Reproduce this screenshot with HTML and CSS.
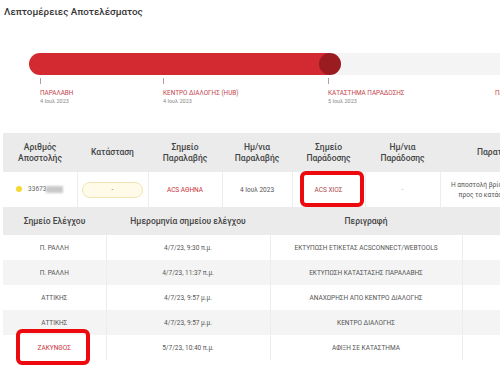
FILE: index.html
```html
<!DOCTYPE html>
<html lang="el">
<head>
<meta charset="utf-8">
<title>Λεπτομέρειες Αποτελέσματος</title>
<link rel="stylesheet" href="styles.css">
</head>
<body>
<div class="page">
  <h1 class="title">Λεπτομέρειες Αποτελέσματος</h1>

  <div class="timeline">
    <div class="track">
      <div class="fill" style="width:301px"></div>
      <div class="knob"></div>
    </div>
    <div class="stops">
      <div class="stop"><span class="tick"></span><span class="stop-name">ΠΑΡΑΛΑΒΗ</span><span class="stop-date">4 Ιουλ 2023</span></div>
      <div class="stop"><span class="tick"></span><span class="stop-name">ΚΕΝΤΡΟ ΔΙΑΛΟΓΗΣ (HUB)</span><span class="stop-date">4 Ιουλ 2023</span></div>
      <div class="stop"><span class="tick"></span><span class="stop-name">ΚΑΤΑΣΤΗΜΑ ΠΑΡΑΔΟΣΗΣ</span><span class="stop-date">5 Ιουλ 2023</span></div>
      <div class="stop stop-next"><span class="tick tick-empty"></span><span class="stop-name">ΠΑΡΑΔΟΣΗ</span><span class="stop-date">&nbsp;</span></div>
    </div>
  </div>

  <table class="grid shipments">
    <colgroup>
      <col class="c74"><col class="c71"><col class="c74"><col class="c70"><col class="c73"><col class="c75"><col class="c130">
    </colgroup>
    <thead>
      <tr>
        <th>Αριθμός<br>Αποστολής</th>
        <th>Κατάσταση</th>
        <th>Σημείο<br>Παραλαβής</th>
        <th>Ημ/νια<br>Παραλαβής</th>
        <th>Σημείο<br>Παράδοσης</th>
        <th>Ημ/νια<br>Παράδοσης</th>
        <th>Παρατηρήσεις</th>
      </tr>
    </thead>
    <tbody>
      <tr class="ship-row">
        <td><span class="num"><span class="dot"></span>33673<span class="masked"></span></span></td>
        <td><span class="pill">-</span></td>
        <td class="red">ACS ΑΘΗΝΑ</td>
        <td>4 Ιουλ 2023</td>
        <td class="marked"><span class="brown">ACS ΧΙΟΣ</span><span class="highlight hl-store"></span></td>
        <td class="muted">-</td>
        <td class="note">Η αποστολή βρίσκεται σε μεταφορά<br>προς το κατάστημα παράδοσης</td>
      </tr>
    </tbody>
  </table>

  <table class="grid checkpoints">
    <colgroup>
      <col class="c103"><col class="c164"><col class="c192"><col class="c150">
    </colgroup>
    <thead>
      <tr>
        <th>Σημείο Ελέγχου</th>
        <th>Ημερομηνία σημείου ελέγχου</th>
        <th>Περιγραφή</th>
        <th>Πληροφορίες</th>
      </tr>
    </thead>
    <tbody>
      <tr><td>Π. ΡΑΛΛΗ</td><td>4/7/23, 9:30 π.μ.</td><td>ΕΚΤΥΠΩΣΗ ΕΤΙΚΕΤΑΣ ACSCONNECT/WEBTOOLS</td><td></td></tr>
      <tr class="alt"><td>Π. ΡΑΛΛΗ</td><td>4/7/23, 11:37 π.μ.</td><td>ΕΚΤΥΠΩΣΗ ΚΑΤΑΣΤΑΣΗΣ ΠΑΡΑΛΑΒΗΣ</td><td></td></tr>
      <tr><td>ΑΤΤΙΚΗΣ</td><td>4/7/23, 9:57 μ.μ.</td><td>ΑΝΑΧΩΡΗΣΗ ΑΠΟ ΚΕΝΤΡΟ ΔΙΑΛΟΓΗΣ</td><td></td></tr>
      <tr class="alt"><td>ΑΤΤΙΚΗΣ</td><td>4/7/23, 9:57 μ.μ.</td><td>ΚΕΝΤΡΟ ΔΙΑΛΟΓΗΣ</td><td></td></tr>
      <tr><td class="marked red">ΖΑΚΥΝΘΟΣ<span class="highlight hl-point"></span></td><td>5/7/23, 10:40 π.μ.</td><td>ΑΦΙΞΗ ΣΕ ΚΑΤΑΣΤΗΜΑ</td><td></td></tr>
    </tbody>
  </table>
</div>
</body>
</html>
```

FILE: styles.css
```css
* { box-sizing: border-box; }

html, body {
  margin: 0;
  padding: 0;
  background: #ffffff;
}

body {
  font-family: Roboto, "Noto Sans", "Liberation Sans", sans-serif;
  color: #555;
}

.page {
  width: 500px;
  height: 374px;
  overflow: hidden;
}

.title {
  margin: 5px 0 0 4px;
  font-size: 9.8px;
  line-height: 14px;
  font-weight: 500;
  color: #333;
}

/* ---------- timeline ---------- */
.timeline {
  margin-top: 34px;
}

.track {
  display: flex;
  margin-left: 29px;
  height: 22px;
  background: #f4f4f4;
  border-radius: 11px 0 0 11px;
}

.fill {
  height: 22px;
  background: #d22a30;
  border-radius: 11px 0 0 11px;
}

.knob {
  width: 22px;
  height: 22px;
  margin-left: -11px;
  border-radius: 50%;
  background: #9a1c21;
}

.stops {
  display: grid;
  grid-template-columns: 123px 165px 167px 1fr;
  margin: 3px 0 0 40px;
}

.stop {
  display: flex;
  flex-direction: column;
  align-items: flex-start;
  white-space: nowrap;
}

.tick {
  width: 1px;
  height: 6px;
  background: #b89a9a;
}

.tick-empty { background: transparent; }

.stop-name {
  margin-top: 5px;
  font-size: 6.4px;
  line-height: 8px;
  color: #c4434a;
}

.stop-date {
  margin-top: 1px;
  font-size: 5.5px;
  line-height: 7px;
  color: #888;
}

/* ---------- tables ---------- */
.grid {
  margin-left: 3px;
  border-collapse: collapse;
  table-layout: fixed;
  font-size: 6.5px;
  color: #555;
}

.shipments { margin-top: 28px; width: 567px; }
.checkpoints { width: 609px; }

.c70 { width: 70px; }
.c71 { width: 71px; }
.c73 { width: 73px; }
.c74 { width: 74px; }
.c75 { width: 75px; }
.c103 { width: 103px; }
.c130 { width: 130px; }
.c150 { width: 150px; }
.c164 { width: 164px; }
.c192 { width: 192px; }

.grid th {
  background: #ebebeb;
  font-weight: 500;
  font-size: 8.5px;
  line-height: 11px;
  color: #444;
  padding: 0;
  text-align: center;
  white-space: nowrap;
  overflow: hidden;
}

.shipments th { height: 39px; }
.checkpoints th { height: 28px; }

.grid td {
  padding: 0;
  text-align: center;
  white-space: nowrap;
  overflow: visible;
}

.grid td + td { border-left: 1px solid #ededed; }

.ship-row td { height: 35px; }

.checkpoints td { height: 25px; }
.checkpoints tr.alt td { background: #f4f4f4; }

.num {
  display: inline-flex;
  align-items: center;
  color: #666;
}

.dot {
  width: 6px;
  height: 6px;
  border-radius: 50%;
  background: #f3da32;
  margin-right: 6px;
}

.masked {
  width: 17px;
  height: 7px;
  background: #c9c9c9;
  filter: blur(0.8px);
}

.pill {
  display: inline-block;
  width: 61px;
  height: 16px;
  line-height: 14px;
  border: 1px solid #f1e4b2;
  border-radius: 8px;
  background: #fffbe8;
  color: #777;
}

.red { color: #c8343b; }
.brown { color: #a9474a; }
.muted { color: #aaa; }

.note {
  font-size: 6.6px;
  line-height: 10px;
  color: #555;
}

.marked { position: relative; }

.highlight {
  position: absolute;
  border: 4px solid #ec0a0f;
  border-radius: 6px;
  pointer-events: none;
}

.hl-store {
  left: 7px;
  top: -1px;
  width: 64px;
  height: 36px;
}

.hl-point {
  left: 13px;
  top: -6px;
  width: 74px;
  height: 36px;
}
```
